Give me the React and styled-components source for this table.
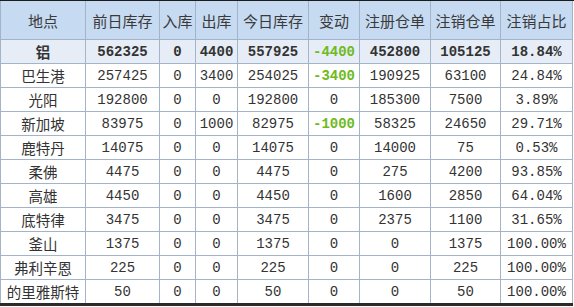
import React from 'react';
import styled, { createGlobalStyle } from 'styled-components';

const GlobalStyle = createGlobalStyle`
  body {
    margin: 0;
    background: #ffffff;
    font-family: "Liberation Mono", "Noto Sans CJK SC", monospace;
  }
`;

const Frame = styled.div`
  width: 574px;
  height: 307px;
  overflow: hidden;
  border-top: 1px solid #1c1c1c;
  box-sizing: border-box;
`;

const Table = styled.table`
  border-collapse: collapse;
  table-layout: fixed;
  width: 573px;
  color: #333333;
  border-bottom: 3px solid #2a2a2a;
`;

const HeadCell = styled.th`
  height: 38px;
  padding: 0;
  background: #c6daf1;
  border: 1px solid #a3b4c8;
  border-top: none;
  font-family: "Noto Sans CJK SC", sans-serif;
  font-weight: normal;
  font-size: 15px;
  color: #3a3a3a;
  text-align: center;
`;

const Row = styled.tr`
  background: ${(p) => (p.$total ? '#e6edf6' : '#ffffff')};
`;

const Cell = styled.td`
  height: 23px;
  padding: 0;
  border: 1px solid #a3b4c8;
  text-align: center;
  white-space: nowrap;
  font-size: 14px;
  font-weight: ${(p) => (p.$bold ? 'bold' : 'normal')};
  color: ${(p) => (p.$green ? '#6fba1f' : '#333333')};
`;

const PlaceCell = styled(Cell)`
  font-family: "Noto Sans CJK SC", sans-serif;
  font-size: 14.5px;
`;

const widths = [85, 74, 36, 42, 71, 51, 71, 70, 72];
const heads = ['地点', '前日库存', '入库', '出库', '今日库存', '变动', '注册仓单', '注销仓单', '注销占比'];

const rows = [
  ['铝', '562325', '0', '4400', '557925', '-4400', '452800', '105125', '18.84%'],
  ['巴生港', '257425', '0', '3400', '254025', '-3400', '190925', '63100', '24.84%'],
  ['光阳', '192800', '0', '0', '192800', '0', '185300', '7500', '3.89%'],
  ['新加坡', '83975', '0', '1000', '82975', '-1000', '58325', '24650', '29.71%'],
  ['鹿特丹', '14075', '0', '0', '14075', '0', '14000', '75', '0.53%'],
  ['柔佛', '4475', '0', '0', '4475', '0', '275', '4200', '93.85%'],
  ['高雄', '4450', '0', '0', '4450', '0', '1600', '2850', '64.04%'],
  ['底特律', '3475', '0', '0', '3475', '0', '2375', '1100', '31.65%'],
  ['釜山', '1375', '0', '0', '1375', '0', '0', '1375', '100.00%'],
  ['弗利辛恩', '225', '0', '0', '225', '0', '0', '225', '100.00%'],
  ['的里雅斯特', '50', '0', '0', '50', '0', '0', '50', '100.00%'],
];

export default function App() {
  return (
    <Frame>
      <GlobalStyle />
      <Table>
        <colgroup>
          {widths.map((w, i) => (
            <col key={i} style={{ width: w }} />
          ))}
        </colgroup>
        <thead>
          <tr>
            {heads.map((h) => (
              <HeadCell key={h}>{h}</HeadCell>
            ))}
          </tr>
        </thead>
        <tbody>
          {rows.map((r, ri) => {
            const total = ri === 0;
            return (
              <Row key={r[0]} $total={total}>
                <PlaceCell $bold={total}>{r[0]}</PlaceCell>
                {r.slice(1).map((v, ci) => {
                  const neg = v.startsWith('-');
                  return (
                    <Cell key={ci} $bold={total || neg} $green={neg}>
                      {v}
                    </Cell>
                  );
                })}
              </Row>
            );
          })}
        </tbody>
      </Table>
    </Frame>
  );
}
